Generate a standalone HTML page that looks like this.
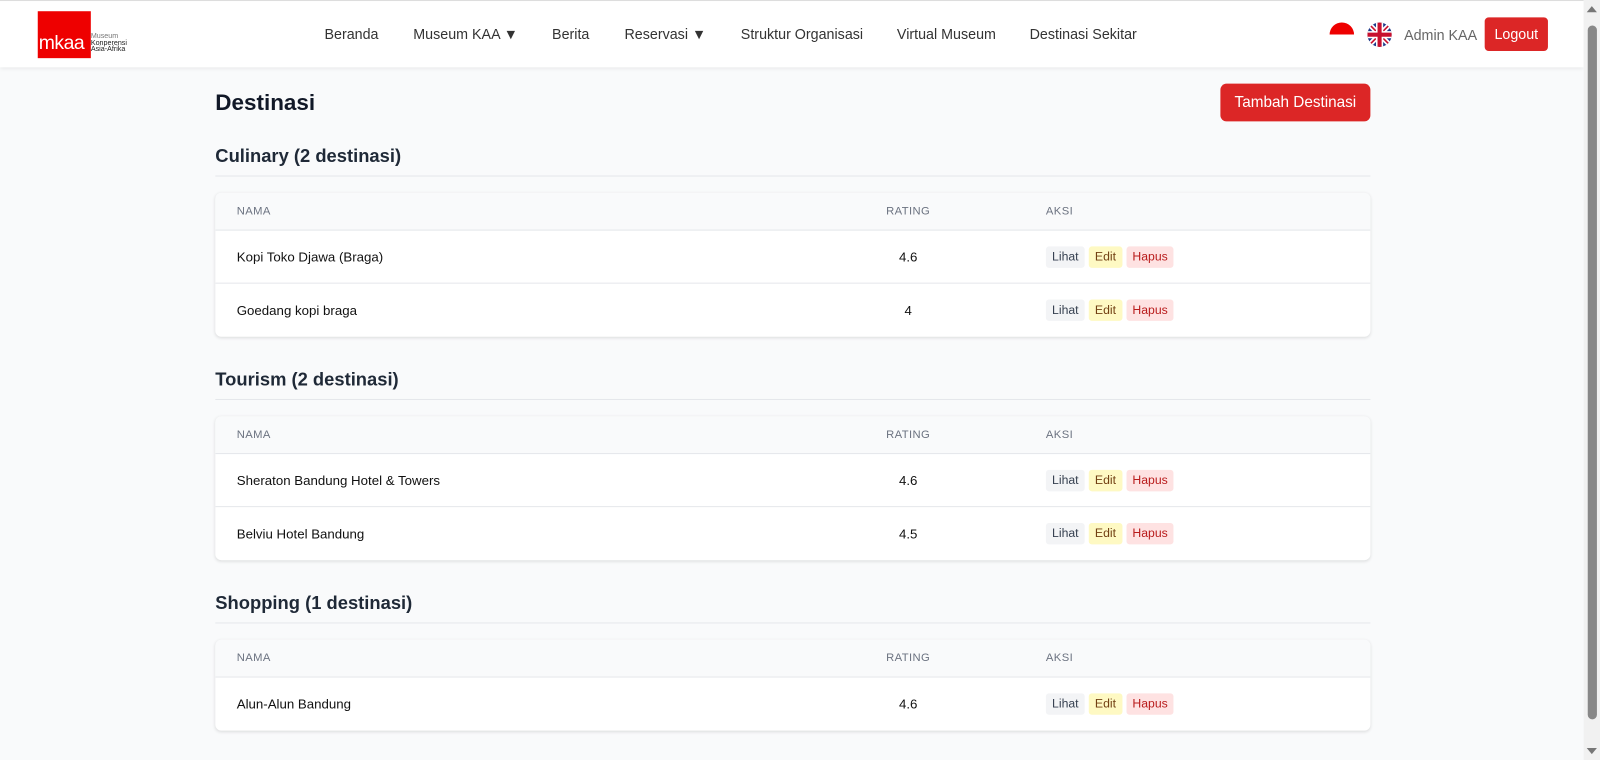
<!DOCTYPE html>
<html><head><meta charset="utf-8"><style>
*{box-sizing:border-box;margin:0;padding:0}
body{width:1600px;height:760px;overflow:hidden;background:#f9fafb;font-family:"Liberation Sans",Arial,sans-serif;color:#111827}
#w{position:absolute;left:0;top:0;width:1568px;height:745px;transform:scale(1.0204);transform-origin:0 0}
.nav{position:absolute;left:0;top:0;width:1552px;height:66px;background:#fff;border-top:1px solid #ddd;box-shadow:0 1px 4px rgba(0,0,0,.08)}
.logo{position:absolute;left:37px;top:10px;width:52px;height:46px;background:#e00;color:#fff;font-size:19px;line-height:1;padding-top:22px;padding-left:1px;letter-spacing:-.5px}
.logot{position:absolute;left:89px;top:32px;font-size:7px;line-height:6.5px;color:#222}
.menu a{position:absolute;top:24px;font-size:14px;color:#333;text-decoration:none}
.flag{position:absolute;border-radius:50%}
.admin{position:absolute;left:1376px;top:25px;font-size:14px;color:#666}
.logout{position:absolute;left:1455px;top:16px;width:62px;height:33px;background:#dc2626;color:#fff;border-radius:4px;font-size:14px;text-align:center;line-height:33px}
.sb{position:absolute;right:0;top:0;width:16px;height:745px;background:#f1f1f1}
.thumb{position:absolute;left:4px;top:25px;width:9px;height:680px;background:#888;border-radius:5px}
h1{position:absolute;left:211px;top:88px;font-size:22px;font-weight:bold}
.add{position:absolute;left:1196px;top:82px;width:147px;height:37px;background:#dc2626;color:#fff;border-radius:6px;font-size:15px;text-align:center;line-height:37px}
h2{position:absolute;left:211px;font-size:18px;font-weight:bold;color:#1f2937;width:1132px;border-bottom:1px solid #e5e7eb;padding-bottom:8px}
.card{position:absolute;left:211px;width:1132px;background:#fff;border-radius:6px;box-shadow:0 1px 3px rgba(0,0,0,.12);overflow:hidden}
.hd{height:37px;background:#f9fafb;border-bottom:1px solid #e5e7eb;position:relative;font-size:11px;color:#6b7280;letter-spacing:.4px}
.row{height:52px;border-bottom:1px solid #e5e7eb;position:relative;font-size:13px;color:#111}
.row:last-child{border-bottom:none}
.c1{position:absolute;left:21px;top:50%;transform:translateY(-50%)}
.c2{position:absolute;left:679px;width:0;top:50%;transform:translateY(-50%);display:flex;justify-content:center;white-space:nowrap}
.c3{position:absolute;left:814px;top:50%;transform:translateY(-50%);display:flex;gap:4px}
.b{font-size:12px;padding:0 6px;height:21px;line-height:21px;border-radius:3px}
.l{background:#f3f4f6;color:#374151}.e{background:#fef9c3;color:#713f12}.h{background:#fee2e2;color:#b91c1c}
</style></head><body><div id="w">
<div class="nav">
<div class="logo">mkaa</div>
<div class="logot"><span style="color:#777">Museum</span><br>Konperensi<br>Asia-Afrika</div>
<div class="menu">
<a style="left:318px">Beranda</a><a style="left:405px">Museum KAA ▼</a><a style="left:541px">Berita</a><a style="left:612px">Reservasi ▼</a><a style="left:726px">Struktur Organisasi</a><a style="left:879px">Virtual Museum</a><a style="left:1009px">Destinasi Sekitar</a>
</div>
<div class="flag" style="left:1303px;top:21px;width:24px;height:24px;background:linear-gradient(#e00 50%,#fff 50%)"></div>
<svg class="flag" style="left:1340px;top:21px" width="24" height="24" viewBox="0 0 24 24"><defs><clipPath id="c"><circle cx="12" cy="12" r="12"/></clipPath></defs><g clip-path="url(#c)"><rect width="24" height="24" fill="#1e3a8a"/><path d="M0 0L24 24M24 0L0 24" stroke="#fff" stroke-width="5"/><path d="M0 0L24 24M24 0L0 24" stroke="#c8102e" stroke-width="1.6"/><path d="M12 0V24M0 12H24" stroke="#fff" stroke-width="7"/><path d="M12 0V24M0 12H24" stroke="#c8102e" stroke-width="4"/></g></svg>
<div class="admin">Admin KAA</div>
<div class="logout">Logout</div>
</div>
<div class="sb"><div class="thumb"></div><div style="position:absolute;left:3px;top:6px;border:5px solid transparent;border-bottom:6px solid #777;border-top:0"></div><div style="position:absolute;left:3px;top:733px;border:5px solid transparent;border-top:6px solid #777;border-bottom:0"></div></div>
<h1>Destinasi</h1><div class="add">Tambah Destinasi</div>

<h2 style="top:143px">Culinary (2 destinasi)</h2>
<div class="card" style="top:189px">
<div class="hd"><span class="c1">NAMA</span><span class="c2">RATING</span><span class="c3">AKSI</span></div>
<div class="row"><span class="c1">Kopi Toko Djawa (Braga)</span><span class="c2">4.6</span><span class="c3"><span class="b l">Lihat</span><span class="b e">Edit</span><span class="b h">Hapus</span></span></div>
<div class="row"><span class="c1">Goedang kopi braga</span><span class="c2">4</span><span class="c3"><span class="b l">Lihat</span><span class="b e">Edit</span><span class="b h">Hapus</span></span></div>
</div>

<h2 style="top:362px">Tourism (2 destinasi)</h2>
<div class="card" style="top:408px">
<div class="hd"><span class="c1">NAMA</span><span class="c2">RATING</span><span class="c3">AKSI</span></div>
<div class="row"><span class="c1">Sheraton Bandung Hotel &amp; Towers</span><span class="c2">4.6</span><span class="c3"><span class="b l">Lihat</span><span class="b e">Edit</span><span class="b h">Hapus</span></span></div>
<div class="row"><span class="c1">Belviu Hotel Bandung</span><span class="c2">4.5</span><span class="c3"><span class="b l">Lihat</span><span class="b e">Edit</span><span class="b h">Hapus</span></span></div>
</div>

<h2 style="top:581px">Shopping (1 destinasi)</h2>
<div class="card" style="top:627px">
<div class="hd"><span class="c1">NAMA</span><span class="c2">RATING</span><span class="c3">AKSI</span></div>
<div class="row"><span class="c1">Alun-Alun Bandung</span><span class="c2">4.6</span><span class="c3"><span class="b l">Lihat</span><span class="b e">Edit</span><span class="b h">Hapus</span></span></div>
</div>
</div></body></html>
